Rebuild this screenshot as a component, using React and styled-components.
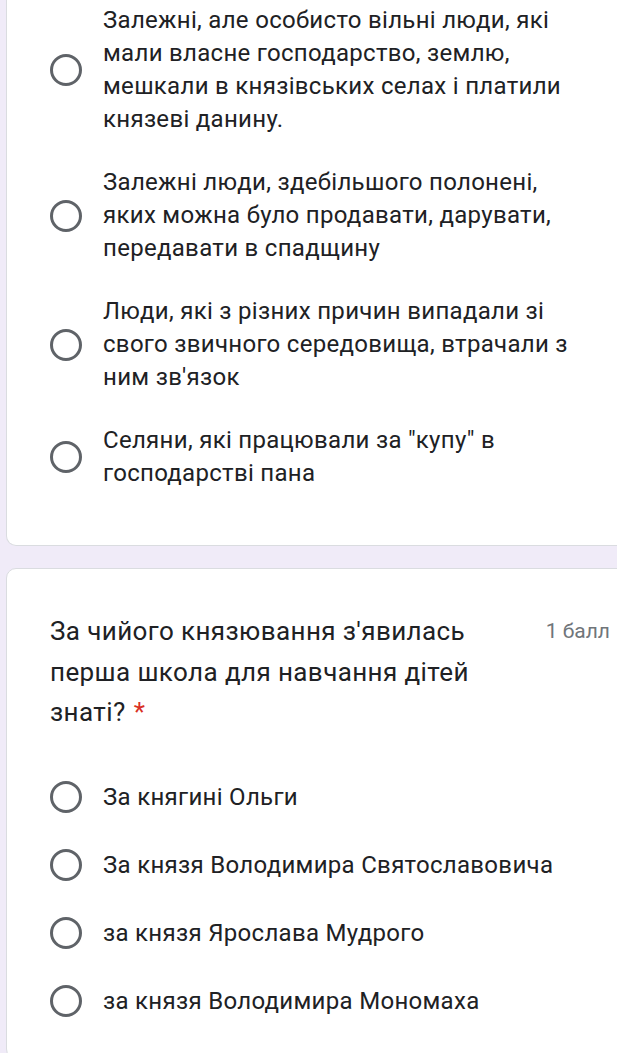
import React from "react";
import styled, { createGlobalStyle } from "styled-components";

const Global = createGlobalStyle`
  html, body { margin: 0; padding: 0; }
  body {
    background: #f0ebf8;
    overflow: hidden;
    font-family: Roboto, "Noto Sans", sans-serif;
    color: #202124;
  }
`;

const Page = styled.div`
  display: flex;
  flex-direction: column;
  gap: 22px;
  padding-left: 6px;
  width: 640px;
`;

const Card = styled.section`
  background: #fff;
  border: 1px solid #dadce0;
  border-radius: ${(p) => (p.$cut ? "0 0 10px 10px" : "10px")};
  border-top: ${(p) => (p.$cut ? "none" : "1px solid #dadce0")};
  padding: ${(p) => p.$pad};
`;

const Header = styled.div`
  display: flex;
  align-items: flex-start;
  padding: 0 35px 0 43px;
  margin-bottom: 48px;
`;

const Title = styled.h2`
  margin: 0;
  width: 450px;
  font-family: Roboto, "Noto Sans", sans-serif;
  font-weight: 400;
  font-size: 26px;
  letter-spacing: 0.4px;
  line-height: 40.5px;
  color: #202124;
`;

const Star = styled.span`
  color: #d93025;
  margin-left: 8px;
`;

const Points = styled.div`
  margin-left: auto;
  font-size: 21px;
  line-height: 40.5px;
  color: #70757a;
  white-space: nowrap;
`;

const Options = styled.div`
  display: flex;
  flex-direction: column;
  gap: ${(p) => p.$gap}px;
  padding-left: 43px;
`;

const Option = styled.label`
  display: flex;
  align-items: center;
  gap: 21px;
`;

const Radio = styled.span`
  flex: none;
  width: 32px;
  height: 32px;
  box-sizing: border-box;
  border: 3px solid #5f6368;
  border-radius: 50%;
`;

const OptionText = styled.span`
  width: ${(p) => p.$w || 500}px;
  font-size: 24px;
  letter-spacing: 0.3px;
  line-height: 33px;
  color: #202124;
`;

const first = [
  "Залежні, але особисто вільні люди, які мали власне господарство, землю, мешкали в князівських селах і платили князеві данину.",
  "Залежні люди, здебільшого полонені, яких можна було продавати, дарувати, передавати в спадщину",
  "Люди, які з різних причин випадали зі свого звичного середовища, втрачали з ним зв'язок",
  "Селяни, які працювали за \"купу\" в господарстві пана",
];

const second = [
  "За княгині Ольги",
  "За князя Володимира Святославовича",
  "за князя Ярослава Мудрого",
  "за князя Володимира Мономаха",
];

export default function App() {
  return (
    <>
      <Global />
      <Page>
        <Card $cut $pad="4px 0 55px">
          <Options $gap={30}>
            {first.map((t) => (
              <Option key={t}>
                <Radio />
                <OptionText $w={478}>{t}</OptionText>
              </Option>
            ))}
          </Options>
        </Card>
        <Card $pad="42px 0 40px">
          <Header>
            <Title>
              За чийого князювання з'явилась перша школа для навчання дітей
              знаті?<Star>*</Star>
            </Title>
            <Points>1 балл</Points>
          </Header>
          <Options $gap={35}>
            {second.map((t) => (
              <Option key={t}>
                <Radio />
                <OptionText>{t}</OptionText>
              </Option>
            ))}
          </Options>
        </Card>
      </Page>
    </>
  );
}
